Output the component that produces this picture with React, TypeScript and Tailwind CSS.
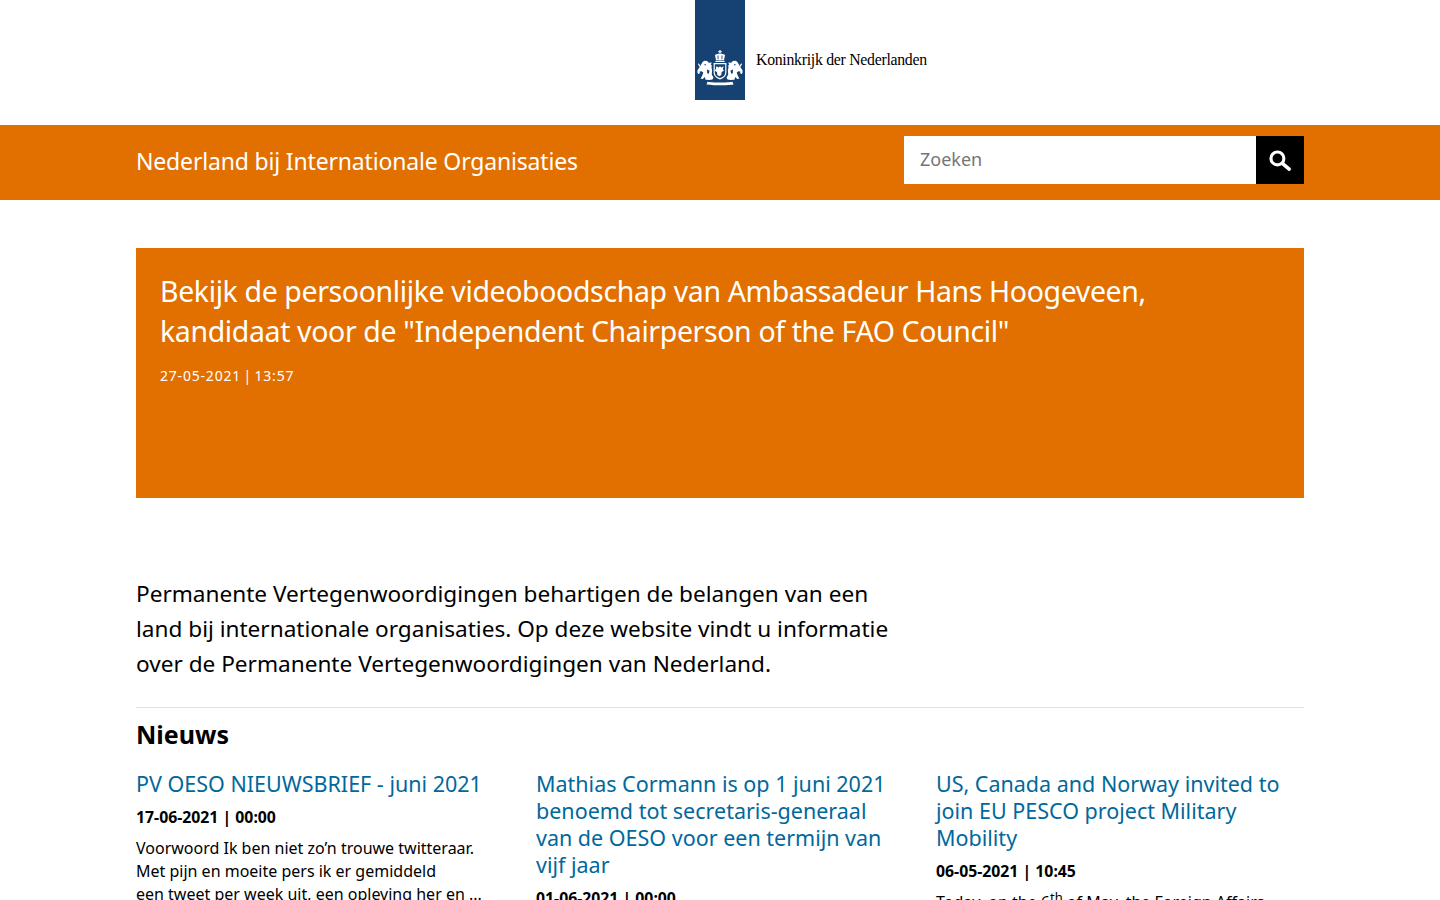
const font = "font-['Noto_Sans',sans-serif]";

function Crest() {
  return (
    <svg viewBox="0 0 50 50" className="w-[50px] h-[50px] block shrink-0" fill="#fff">
      {/* crown */}
      <path d="M24.4 0h1.2v1.2h1.2v1h-1.2v1.3h-1.2V2.2h-1.2v-1h1.2z" />
      <path d="M20 5c2-1.8 8-1.8 10 0l-1 5.2h-8z" />
      <path fill="#154273" d="M22.6 5.600h.9v3.600h-.9zM26.500 5.600h.9v3.600h-.9z" />
      <path d="M20.400 10.800h9.200v1.200h-9.200z" />
      {/* shield */}
      <path d="M18.600 13h12.800v9.500c0 3.800-3.200 6-6.400 7-3.200-1-6.400-3.200-6.400-7z" />
      <path fill="#154273" d="M19.800 14.200h10.400v8.200c0 3-2.600 4.800-5.200 5.700-2.600-.9-5.200-2.700-5.200-5.700z" />
      <path d="M21.400 16.200l2.300 1.300 1.300-1.300 1.300 1.300 2.300-1.300-.7 3 1 1.600-2.300 1.200-.3 3-2 1.300-2-1.300-.3-3-2.300-1.200 1-1.600z" />
      {/* left lion */}
      <path d="M5 16.500l2.400-4.300 1.800-1.400 3 .2 1.600 1.800 3-.2-1 1.800 1 1.200-.3 2 .6 2.600-.3 4.200 1.700 3.400-1.100 1.600-3 .5-3.800-.2-.8-2.800-2 2-2.200-.4 1.700-3.100 1-3-1.700-1.200-2 .4-.6 1.800-1.400-.5-.2-2.400z" />
      <path fill="#154273" d="M9.400 14.200h1.600v1H9.400zM12 19.500l2.500 1-.6 3.200-1.700-.4z" />
      <path d="M3.800 13.200l1.900 3-1 .9-1.700-2.800zM3.200 21.600l1.600.2-.5 2.200-1.600-.5z" />
      {/* right lion */}
      <path d="M45 16.500l-2.400-4.300-1.800-1.400-3 .2-1.600 1.800-3-.2 1 1.800-1 1.200.3 2-.6 2.600.3 4.200-1.700 3.400 1.100 1.600 3 .5 3.800-.2.8-2.800 2 2 2.200-.4-1.700-3.100-1-3 1.700-1.200 2 .4.600 1.800 1.400-.5.2-2.400z" />
      <path fill="#154273" d="M39 14.200h1.600v1H39zM38 19.500l-2.500 1 .6 3.200 1.700-.4z" />
      <path d="M46.200 13.200l-1.900 3 1 .9 1.700-2.800zM46.800 21.600l-1.600.2.500 2.200 1.600-.5z" />
      {/* ribbon */}
      <path d="M12.500 31.800c4 1 21 1 25 0l1 2.600c-4.600 1-22.400 1-27 0z" />
    </svg>
  );
}

function SearchIcon() {
  return (
    <svg viewBox="0 0 24 24" className="w-[25px] h-[25px] -ml-px" fill="none" stroke="#fff" strokeLinecap="round">
      <circle cx="10" cy="10" r="6.200" strokeWidth="3" />
      <path d="M15 15l6.300 5.300" strokeWidth="3.400" />
    </svg>
  );
}

const items = [
  {
    title: "PV OESO NIEUWSBRIEF - juni 2021",
    date: "17-06-2021 | 00:00",
    body: (
      <>
        Voorwoord Ik ben niet zo’n trouwe twitteraar.
        <br />
        Met pijn en moeite pers ik er gemiddeld
        <br />
        een tweet per week uit, een opleving her en ...
      </>
    ),
  },
  {
    title: "Mathias Cormann is op 1 juni 2021 benoemd tot secretaris-generaal van de OESO voor een termijn van vijf jaar",
    date: "01-06-2021 | 00:00",
    body: <>Op 1 juni 2021 is Mathias Cormann benoemd</>,
  },
  {
    title: "US, Canada and Norway invited to join EU PESCO project Military Mobility",
    date: "06-05-2021 | 10:45",
    body: (
      <>
        Today, on the 6<sup className="text-[13px]">th</sup> of May, the Foreign Affairs
      </>
    ),
  },
];

export default function App() {
  return (
    <div className={`h-[900px] overflow-hidden bg-white text-black ${font}`}>
      <header className="h-[125px]">
        <div className="mx-auto flex w-[50px] items-start">
          <div className="w-[50px] h-[100px] bg-[#154273] flex items-end shrink-0">
            <div className="h-[50px] w-[50px]">
              <Crest />
            </div>
          </div>
          <span className="ml-[11px] mt-[50px] text-[15.8px] leading-[20px] tracking-[-0.28px] whitespace-nowrap font-['Liberation_Serif',serif]">
            Koninkrijk der Nederlanden
          </span>
        </div>
      </header>

      <div className="h-[75px] bg-[#e17000]">
        <div className="mx-[136px] flex items-start justify-between">
          <a className="mt-5 text-[23px] leading-[32px] tracking-[-0.17px] text-white">Nederland bij Internationale Organisaties</a>
          <div className="mt-[11px] flex w-[400px] h-12">
            <div className="flex-1 bg-white pl-4 text-[18px] leading-[47px] text-[#757575]">Zoeken</div>
            <button className="w-12 h-12 bg-black flex items-center justify-center">
              <SearchIcon />
            </button>
          </div>
        </div>
      </div>

      <main className="mx-[136px]">
        <section className="mt-12 h-[250px] bg-[#e17000] px-6 pt-[23px] text-white">
          <h1 className="text-[28.5px] leading-10 tracking-[-0.38px] max-w-[1020px]">
            Bekijk de persoonlijke videoboodschap van Ambassadeur Hans Hoogeveen, kandidaat voor de "Independent Chairperson of the FAO Council"
          </h1>
          <p className="mt-[15px] text-[14px] leading-5 tracking-[0.8px] [word-spacing:-2px]">27-05-2021 | 13:57</p>
        </section>

        <p className="mt-[78px] w-[770px] text-[22.6px] leading-[35px]">
          Permanente Vertegenwoordigingen behartigen de belangen van een land bij internationale organisaties. Op deze website vindt u informatie over de Permanente Vertegenwoordigingen van Nederland.
        </p>

        <section className="mt-[26px] border-t border-[#e0e0e0]">
          <h2 className="mt-2 text-[25px] leading-9 font-bold">Nieuws</h2>
          <div className="mt-[18px] grid grid-cols-3 gap-8">
            {items.map((it) => (
              <article key={it.date}>
                <a className="block text-[21.5px] leading-[27px] text-[#01689b]">{it.title}</a>
                <p className="mt-2 text-[15.8px] leading-6 font-bold">{it.date}</p>
                <p className="mt-2 text-[16px] leading-[23px]">{it.body}</p>
              </article>
            ))}
          </div>
        </section>
      </main>
    </div>
  );
}
